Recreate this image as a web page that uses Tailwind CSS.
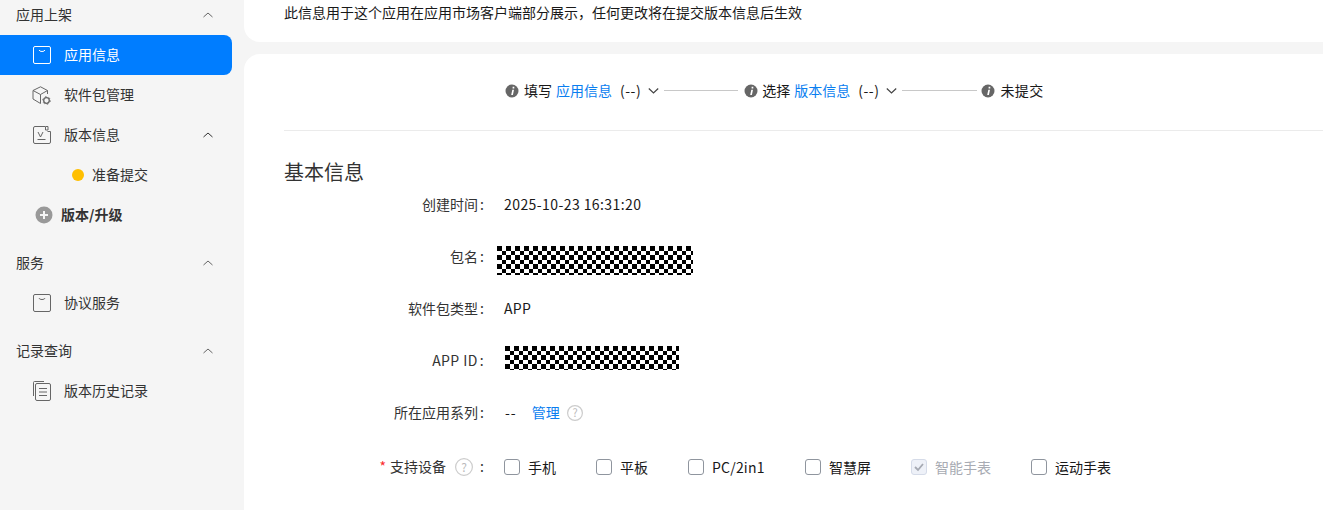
<!DOCTYPE html>
<html lang="zh-CN">
<head>
  <meta charset="UTF-8">
  <title>应用信息</title>
  <script src="https://cdn.jsdelivr.net/npm/@tailwindcss/browser@4"></script>
</head>
<body class="h-[510px] overflow-hidden bg-[#f5f5f5] text-[14px] text-[#191919] font-['Noto_Sans_CJK_SC','Liberation_Sans',sans-serif]">
  <svg class="absolute w-0 h-0"><defs><pattern id="mask-cells" width="9" height="9" patternUnits="userSpaceOnUse"><rect width="9" height="9" fill="#fff"/><rect width="4.500" height="4.500" fill="#000" shape-rendering="crispEdges"/><rect x="4.500" y="4.500" width="4.500" height="4.500" fill="#000" shape-rendering="crispEdges"/></pattern></defs></svg>
  <div class="flex h-[510px] overflow-hidden">
    <!-- sidebar -->
    <aside class="w-[244px] shrink-0 -mt-[5px] text-[#333]">
      <div class="flex h-10 items-center justify-between pl-4 pr-[30px]">
        <span class="-mt-0.5">应用上架</span>
        <svg class="w-3 h-2" viewBox="0 0 12 8" fill="none" stroke="#666" stroke-width="1"><path d="M1.500 6 6 2l4.500 4"/></svg>
      </div>
      <div class="flex h-10 w-[232px] items-center gap-[13px] rounded-r-lg bg-[#007dff] pl-[33px] text-white">
        <svg class="w-[18px] h-[18px]" viewBox="0 0 18 18" fill="none" stroke="#fff" stroke-width="1"><rect x="0.5" y="0.5" width="17" height="17" rx="1.5"/><path d="M6 4c.5 2 5.500 2 6 0"/></svg>
        <span class="-mt-0.5">应用信息</span>
      </div>
      <div class="flex h-10 items-center gap-[13px] pl-[32px]">
        <svg class="w-[19px] h-[19px]" viewBox="0 0 19 19" fill="none" stroke="#666" stroke-width="1" stroke-linejoin="round"><path d="M15.500 8V4.500L8.500 .8 1 4.500v8.500l7.500 4.500"/><path d="M1 4.500 8.500 8.500 15.500 4.500M8.500 8.500v9"/><circle cx="14.500" cy="14.500" r="3.200" fill="#f5f5f5" stroke="#f5f5f5"/><circle cx="14.500" cy="14.500" r="2.800" stroke="#666" stroke-width="1.300"/><circle cx="14.500" cy="14.500" r="3.800" stroke="#666" stroke-width="1" stroke-dasharray="1.500 2.480"/></svg>
        <span class="-mt-0.5">软件包管理</span>
      </div>
      <div class="flex h-10 items-center justify-between pl-[33px] pr-[30px]">
        <div class="flex items-center gap-[13px]">
          <svg class="w-[18px] h-[18px]" viewBox="0 0 18 18" fill="none" stroke="#666" stroke-width="1"><path d="M12 .5H2A1.500 1.500 0 0 0 .5 2v14A1.500 1.500 0 0 0 2 17.500h14a1.500 1.500 0 0 0 1.500-1.500V5.500h-3"/><path d="M12.500.5h2.500v3.500h-2.500z"/><path d="M5 6l2.500 5L10 6M4.500 13.500h8"/></svg>
          <span class="-mt-0.5">版本信息</span>
        </div>
        <svg class="w-3 h-2" viewBox="0 0 12 8" fill="none" stroke="#333" stroke-width="1"><path d="M1.500 6 6 2l4.500 4"/></svg>
      </div>
      <div class="flex h-10 items-center gap-[8px] pl-[72px]">
        <span class="w-3 h-3 rounded-full bg-[#ffbf00]"></span>
        <span class="-mt-0.5">准备提交</span>
      </div>
      <div class="flex h-10 items-center gap-2 pl-[35px] font-bold">
        <svg class="w-[18px] h-[18px]" viewBox="0 0 18 18"><circle cx="9" cy="9" r="8.500" fill="#999"/><path d="M9 5v8M5 9h8" stroke="#f5f5f5" stroke-width="2"/></svg>
        <span class="-mt-0.5">版本/升级</span>
      </div>
      <div class="mt-2 flex h-10 items-center justify-between pl-4 pr-[30px]">
        <span class="-mt-0.5">服务</span>
        <svg class="w-3 h-2" viewBox="0 0 12 8" fill="none" stroke="#666" stroke-width="1"><path d="M1.500 6 6 2l4.500 4"/></svg>
      </div>
      <div class="flex h-10 items-center gap-[13px] pl-[33px]">
        <svg class="w-[18px] h-[18px]" viewBox="0 0 18 18" fill="none" stroke="#666" stroke-width="1"><rect x="0.5" y="0.5" width="17" height="17" rx="1.500"/><path d="M6 4c.5 2 5.500 2 6 0"/></svg>
        <span class="-mt-0.5">协议服务</span>
      </div>
      <div class="mt-2 flex h-10 items-center justify-between pl-4 pr-[30px]">
        <span class="-mt-0.5">记录查询</span>
        <svg class="w-3 h-2" viewBox="0 0 12 8" fill="none" stroke="#666" stroke-width="1"><path d="M1.500 6 6 2l4.500 4"/></svg>
      </div>
      <div class="flex h-10 items-center gap-[13px] pl-[33px]">
        <svg class="w-[18px] h-[20px]" viewBox="0 0 18 20" fill="none" stroke="#666" stroke-width="1"><path d="M11 .5H1.500A1 1 0 0 0 .5 1.500V15"/><rect x="2.500" y="2.500" width="15" height="17" rx="1.500"/><path d="M6 7.500h8M6 11h8M6 14.500h8"/></svg>
        <span class="-mt-0.5">版本历史记录</span>
      </div>
    </aside>

    <main class="flex-1 min-w-0">
      <div class="flex h-[42px] items-start rounded-bl-2xl bg-white pl-10 pt-[2px] text-[#191919]">
        <span>此信息用于这个应用在应用市场客户端部分展示，任何更改将在提交版本信息后生效</span>
      </div>
      <div class="mt-3 h-[480px] rounded-tl-2xl bg-white pl-10">
        <!-- steps -->
        <div class="flex h-[77px] items-center border-b border-[#ebebeb] pb-[3px] pl-[221px]">
          <svg class="w-[14px] h-[14px] shrink-0" viewBox="0 0 14 14"><circle cx="7" cy="7" r="6.500" fill="#666"/><path d="M7.600 2.800h1.700v1.700H7.600zM7.300 5.800h1.700L7.900 11H6.200z" fill="#fff"/></svg>
          <span class="ml-[5px]">填写</span>
          <span class="ml-1 text-[#0a7ef0]">应用信息</span>
          <span class="ml-2 tracking-[0.5px]">(--)</span>
          <svg class="ml-[7px] w-[11px] h-2" viewBox="0 0 11 8" fill="none" stroke="#444" stroke-width="1.200"><path d="M.8 1.500 5.500 6l4.700-4.500"/></svg>
          <span class="ml-[5px] h-px w-[74px] bg-[#c8c8c8]"></span>
          <svg class="ml-[6px] w-[14px] h-[14px] shrink-0" viewBox="0 0 14 14"><circle cx="7" cy="7" r="6.500" fill="#666"/><path d="M7.600 2.800h1.700v1.700H7.600zM7.300 5.800h1.700L7.900 11H6.200z" fill="#fff"/></svg>
          <span class="ml-1">选择</span>
          <span class="ml-1 text-[#0a7ef0]">版本信息</span>
          <span class="ml-2 tracking-[0.5px]">(--)</span>
          <svg class="ml-[7px] w-[11px] h-2" viewBox="0 0 11 8" fill="none" stroke="#444" stroke-width="1.200"><path d="M.8 1.500 5.500 6l4.700-4.500"/></svg>
          <span class="ml-[5px] h-px w-[75px] bg-[#c8c8c8]"></span>
          <svg class="ml-[4px] w-[14px] h-[14px] shrink-0" viewBox="0 0 14 14"><circle cx="7" cy="7" r="6.500" fill="#666"/><path d="M7.600 2.800h1.700v1.700H7.600zM7.300 5.800h1.700L7.900 11H6.200z" fill="#fff"/></svg>
          <span class="ml-[5px] tracking-[0.5px]">未提交</span>
        </div>

        <h2 class="mt-[35px] text-[20px] leading-[12px] text-[#333]">基本信息</h2>

        <!-- form rows -->
        <div class="mt-px flex h-[52px] items-center">
          <div class="w-[200px] -mt-0.5 text-right text-[#333]">创建时间<span class="ml-[2px]">:</span></div>
          <div class="ml-5 -mt-0.5 tracking-[0.42px]">2025-10-23 16:31:20</div>
        </div>
        <div class="flex h-[52px] items-center">
          <div class="w-[200px] -mt-0.5 text-right text-[#333]">包名<span class="ml-[2px]">:</span></div>
          <svg class="ml-[13px] self-start mt-[15px] h-[29px] w-[196px]"><rect width="196" height="29" fill="url(#mask-cells)"/></svg>
        </div>
        <div class="flex h-[52px] items-center">
          <div class="w-[200px] -mt-0.5 text-right text-[#333]">软件包类型<span class="ml-[2px]">:</span></div>
          <div class="ml-5 -mt-0.5 tracking-[0.3px]">APP</div>
        </div>
        <div class="flex h-[52px] items-center">
          <div class="w-[200px] -mt-0.5 text-right text-[#333] tracking-[0.4px]">APP ID<span class="ml-[2px]">:</span></div>
          <svg class="ml-[21px] self-start mt-[11px] h-[24px] w-[174px]"><rect width="174" height="24" fill="url(#mask-cells)"/></svg>
        </div>
        <div class="flex h-[52px] items-center">
          <div class="w-[200px] -mt-0.5 text-right text-[#333]">所在应用系列<span class="ml-[2px]">:</span></div>
          <div class="ml-[21px] -mt-0.5 tracking-[1px]">--</div>
          <div class="ml-[15px] -mt-0.5 text-[#0a7ef0]">管理</div>
          <svg class="ml-[7px] w-4 h-4" viewBox="0 0 16 16" fill="none"><circle cx="8" cy="8" r="7.400" stroke="#ccc" stroke-width="1.200"/><text x="8" y="12" text-anchor="middle" font-size="11" fill="#bbb">?</text></svg>
        </div>
        <div class="mt-[2px] flex h-[52px] items-center">
          <div class="flex w-[200px] items-center justify-end text-[#333]">
            <span class="mr-[4px] -mt-0.5 text-[#fa2a2d]">*</span>
            <span class="-mt-0.5">支持设备</span>
            <svg class="ml-[9px] w-[18px] h-[18px]" viewBox="0 0 18 18" fill="none"><circle cx="9" cy="9" r="8.400" stroke="#ccc" stroke-width="1.200"/><text x="9" y="13.500" text-anchor="middle" font-size="12" fill="#bbb">?</text></svg>
            <span class="ml-[7px] -mt-0.5">:</span>
          </div>
          <div class="ml-5 flex items-center">
            <span class="h-4 w-4 rounded-[3px] border border-[#8f959e]"></span><span class="ml-2">手机</span>
            <span class="ml-10 h-4 w-4 rounded-[3px] border border-[#8f959e]"></span><span class="ml-2">平板</span>
            <span class="ml-10 h-4 w-4 rounded-[3px] border border-[#8f959e]"></span><span class="ml-2 w-[53px] tracking-[0.2px]">PC/2in1</span>
            <span class="ml-10 h-4 w-4 rounded-[3px] border border-[#8f959e]"></span><span class="ml-2">智慧屏</span>
            <span class="ml-10 flex h-4 w-4 items-center justify-center rounded-[3px] border border-[#d5dbe8] bg-[#eef1f8]">
              <svg class="w-3 h-3" viewBox="0 0 12 12" fill="none" stroke="#a5a9b2" stroke-width="1.800"><path d="M2 6l3 3 5-6"/></svg>
            </span><span class="ml-2 text-[#a8abb3]">智能手表</span>
            <span class="ml-10 h-4 w-4 rounded-[3px] border border-[#8f959e]"></span><span class="ml-2">运动手表</span>
          </div>
        </div>
      </div>
    </main>
  </div>
</body>
</html>
